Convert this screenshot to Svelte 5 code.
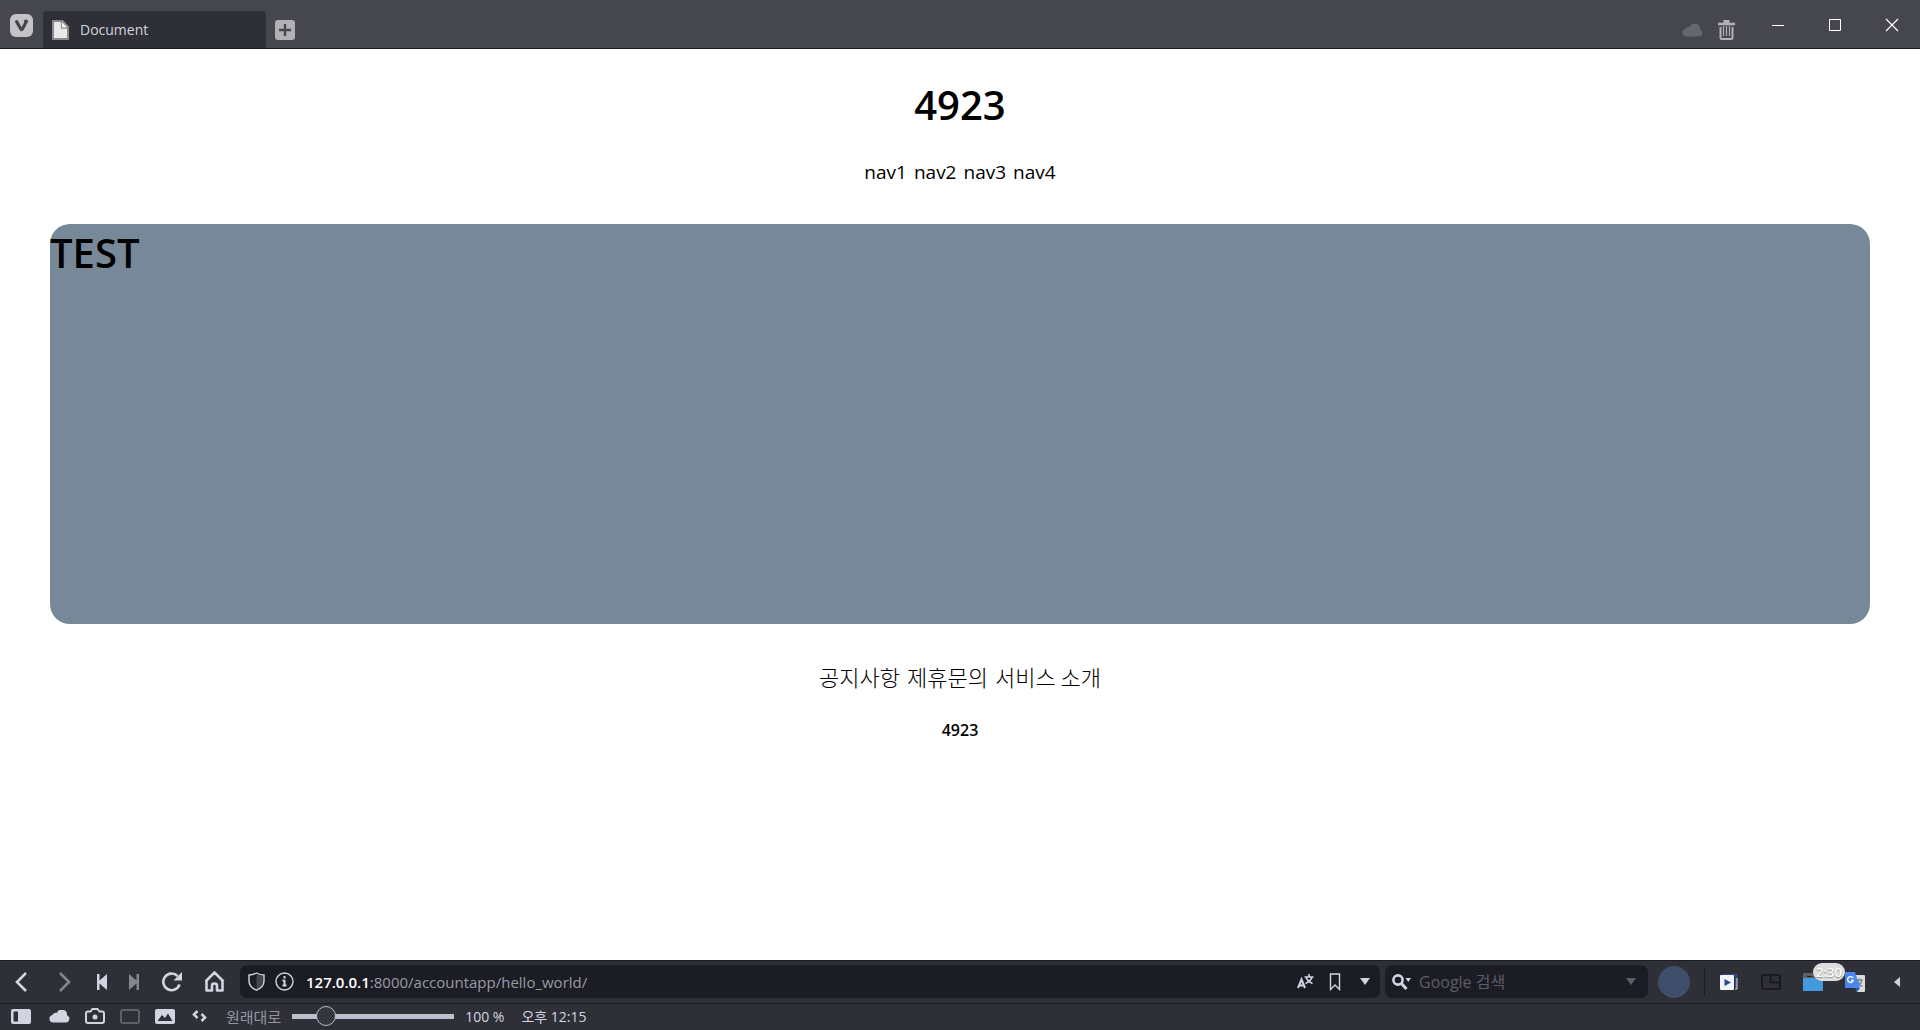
<script>
  let zoom = $state(100);
  const navLinks = ['nav1', 'nav2', 'nav3', 'nav4'];
  const footerLinks = ['공지사항', '제휴문의', '서비스 소개'];
</script>

<div class="browser">
  <header class="tabbar">
    <button class="app" aria-label="Vivaldi menu">
      <svg width="23" height="23" viewBox="0 0 23 23">
        <rect width="23" height="23" rx="6" fill="#c3c3c7" />
        <path d="M6.600 7.600 11 15.200Q11.600 16 12.200 15.200L14.600 11Q16 9 15.800 7.600" fill="none" stroke="#46464e" stroke-width="3.200" stroke-linecap="round" stroke-linejoin="round" />
        <circle cx="16" cy="7.600" r="2" fill="#46464e" />
      </svg>
    </button>
    <button class="tab">
      <svg width="17" height="20" viewBox="0 0 17 20">
        <path d="M1 1h9.500l5.500 6v12H1z" fill="#e9e9e9" stroke="#8b8b8b" stroke-width="2" stroke-linejoin="round" />
        <path d="M9.500 2v6H15" fill="#fff" stroke="#999" stroke-width="1.400" />
      </svg>
      <span>Document</span>
    </button>
    <button class="newtab" aria-label="New tab">
      <svg width="20" height="20" viewBox="0 0 20 20">
        <rect width="20" height="20" rx="3" fill="#b1b1b5" />
        <path d="M10 4v12M4 10h12" stroke="#46464e" stroke-width="2.400" />
      </svg>
    </button>
    <div class="fill"></div>
    <button class="tool" aria-label="Synced tabs">
      <svg width="21" height="13" viewBox="0 0 21 13"><path d="M4 12.500a3.800 3.800 0 0 1-.6-7.500A4 4 0 0 1 8 2.800a5.200 5.200 0 0 1 10 2.400 3.800 3.800 0 0 1-1 7.300z" fill="#66666e" /></svg>
    </button>
    <button class="tool" aria-label="Closed tabs">
      <svg width="17" height="20" viewBox="0 0 17 20" fill="none" stroke="#b1b1b5">
        <path d="M0 4h17" stroke-width="2.600" /><path d="M5.500 1.500h6" stroke-width="3" />
        <path d="M2.500 7v10.500q0 1.500 1.500 1.500h9q1.500 0 1.500-1.500V7" stroke-width="2" />
        <path d="M5.500 6v10M8.500 6v10M11.500 6v10" stroke-width="1.200" />
      </svg>
    </button>
    <div class="window">
      <button aria-label="Minimize"><svg width="14" height="14"><path d="M1 7.500h12" stroke="#fff" /></svg></button>
      <button aria-label="Maximize"><svg width="14" height="14"><path d="M1.500 1.500h11v11h-11z" stroke="#fff" fill="none" /></svg></button>
      <button aria-label="Close"><svg width="14" height="14"><path d="m1 1 12 12M13 1 1 13" stroke="#fff" stroke-width="1.200" /></svg></button>
    </div>
  </header>

  <main class="page">
    <h1>4923</h1>
    <nav>
      {#each navLinks as link}<a href="#{link}">{link}</a>{/each}
    </nav>
    <section class="hero"><h2>TEST</h2></section>
    <footer>
      <div class="links">
        {#each footerLinks as link}<a href="#{link}">{link}</a>{/each}
      </div>
      <h6>4923</h6>
    </footer>
  </main>

  <div class="toolbar">
    <button class="wide" aria-label="Back"><svg width="14" height="22" viewBox="0 0 14 22"><path d="M11 2 2 11l9 9" class="line" /></svg></button>
    <button class="wide dim" aria-label="Forward"><svg width="14" height="22" viewBox="0 0 14 22"><path d="m2 2 9 9-9 9" class="line" /></svg></button>
    <button class="narrow" aria-label="Rewind"><svg width="12" height="16" viewBox="0 0 12 16"><path d="M1 0h2.500v6.500L11 0v16L3.500 9.500V16H1z" fill="currentColor" /></svg></button>
    <button class="narrow dim" aria-label="Fast forward"><svg width="12" height="16" viewBox="0 0 12 16"><path d="M11 0H8.500v6.500L1 0v16l7.500-6.500V16H11z" fill="currentColor" /></svg></button>
    <button class="wide" aria-label="Reload"><svg width="20" height="20" viewBox="0 0 20 20"><path d="M17.500 12.500A8.300 8.300 0 1 1 15.500 4" class="line" /><path d="M20 0v8.500h-8.500z" fill="currentColor" /></svg></button>
    <button class="home" aria-label="Home"><svg width="21" height="21" viewBox="0 0 21 21"><path d="M1.500 10.500 10.500 1.500l9 9M2.500 10v9.500h5.500v-5q0-2 2.500-2t2.500 2v5h5.500V10" class="line" stroke-linejoin="round" /></svg></button>

    <div class="field address">
      <button class="info" aria-label="Content blocker"><svg width="17" height="19" viewBox="0 0 17 19"><path d="M8.500 2.500 15 4v5c0 4-2.500 6.500-6.500 8.500z" fill="#46464e" /><path d="M8.500 1Q12 3 16 3v6q0 6-7.500 9.200Q1 15 1 9V3q4 0 7.500-2z" fill="none" stroke="currentColor" stroke-width="1.400" /></svg></button>
      <button class="info" aria-label="Site info"><svg width="19" height="19" viewBox="0 0 19 19"><circle cx="9.500" cy="9.500" r="8.500" fill="none" stroke="currentColor" stroke-width="1.400" /><path d="M9.500 4v2.500M9.500 8v6M7.500 8.500h2M7.500 13.500h4" stroke="currentColor" stroke-width="2" /></svg></button>
      <div class="url" role="textbox" tabindex="0" aria-label="Address" contenteditable="true" spellcheck="false"><b>127.0.0.1</b>:8000/accountapp/hello_world/</div>
      <button class="action" aria-label="Translate page"><svg width="17" height="15" viewBox="0 0 17 15" fill="none" stroke="currentColor"><path d="M1 14 4.500 5.500 8 14M2.200 11.500h4.600" stroke-width="2" /><path d="M7.500 3h9M12 0v3M9 3q1 4 6.500 6.500M15 3q-1 4-6.500 6.500" stroke-width="1.600" /></svg></button>
      <button class="action" aria-label="Bookmark"><svg width="12" height="18" viewBox="0 0 12 18"><path d="M1.500 1h9v15.500L6 12l-4.500 4.500z" fill="none" stroke="currentColor" stroke-width="1.400" /></svg></button>
      <button class="action" aria-label="History"><svg width="10" height="7" viewBox="0 0 10 7"><path d="M0 0h10L5 7z" fill="currentColor" /></svg></button>
    </div>

    <div class="field search">
      <button class="engine" aria-label="Search engine"><svg width="20" height="16" viewBox="0 0 20 16"><circle cx="6" cy="6" r="4.600" fill="none" stroke="currentColor" stroke-width="2.600" /><path d="m9.500 9.500 5 5.500" stroke="currentColor" stroke-width="3" /><path d="M13.500 4H19l-2.750 4z" fill="currentColor" /></svg></button>
      <input type="text" aria-label="Google 검색" placeholder="Google 검색" />
      <button class="action muted" aria-label="Search history"><svg width="10" height="7" viewBox="0 0 10 7"><path d="M0 0h10L5 7z" fill="currentColor" /></svg></button>
    </div>

    <button class="profile" aria-label="Profile"></button>
    <span class="divider"></span>
    <button class="ext" aria-label="Media extension"><svg width="18" height="16" viewBox="0 0 18 16"><path d="M3 0h13v14" fill="none" stroke="#2c4f93" stroke-width="2" /><path d="M17 4v11h-2" fill="none" stroke="#d5d8e0" /><rect y="1" width="14" height="15" rx="1" fill="#f2f3f5" /><path d="M4.500 5v7L11 8.500z" fill="#244d93" /></svg></button>
    <button class="ext" aria-label="Picture in picture"><svg width="20" height="16" viewBox="0 0 20 16" fill="none" stroke="#15161b" stroke-width="1.600"><rect x="1" y="1" width="18" height="14" rx="1" /><path d="M9.500 2v6.500H18" /></svg></button>
    <button class="ext" aria-label="Timer extension"><svg width="20" height="18" viewBox="0 0 20 18"><path d="M0 0h20v5H0z" fill="#5f6062" /><path d="M4 3.500h5" stroke="#222" /><path d="M0 5h20v13H0z" fill="#4498dc" /></svg><span class="badge">2:30</span></button>
    <button class="ext" aria-label="Google Translate"><svg width="20" height="20" viewBox="0 0 20 20"><path d="M8 3h11q1 0 1 1v15q0 1-1 1h-7z" fill="#dadbdd" /><path d="M11.500 8h6M14.500 6.500V8M12.500 8.500q1 4 5 6M17 8q-1 4-4 7" fill="none" stroke="#6f8990" stroke-width="1.300" /><path d="M1 0h9l5 16H1q-1 0-1-1V1q0-1 1-1z" fill="#4a86ee" /><path d="M10 16h5l-3 4z" fill="#2f55b7" /><path d="M8 6A2.900 2.900 0 1 0 8.300 8.500H6" fill="none" stroke="#fff" stroke-width="1.400" /></svg></button>
    <button class="ext" aria-label="Show extensions"><svg width="6" height="10" viewBox="0 0 6 10"><path d="M6 0v10L0 5z" fill="currentColor" /></svg></button>
  </div>

  <div class="status">
    <button class="panel" aria-label="Panel"><svg width="20" height="15" viewBox="0 0 20 15"><rect width="20" height="15" rx="2" fill="currentColor" /><path d="M2.500 2.500H7v10H2.500z" fill="#2f2f37" /></svg></button>
    <button aria-label="Sync"><svg width="21" height="13" viewBox="0 0 21 13"><path d="M4 12.500a3.800 3.800 0 0 1-.6-7.500A4 4 0 0 1 8 2.800a5.200 5.200 0 0 1 10 2.400 3.800 3.800 0 0 1-1 7.300z" fill="currentColor" /></svg></button>
    <button aria-label="Capture page"><svg width="20" height="16" viewBox="0 0 20 16"><path d="M3 3.500h2.500L7.500 1h5l2 2.500H17q2 0 2 2V13q0 2-2 2H3q-2 0-2-2V5.500q0-2 2-2z" fill="none" stroke="currentColor" stroke-width="2" /><circle cx="10" cy="9" r="2.500" fill="currentColor" /></svg></button>
    <button class="faint" aria-label="Tile tabs"><svg width="20" height="15" viewBox="0 0 20 15"><rect x="1" y="1" width="18" height="13" rx="2" fill="none" stroke="currentColor" stroke-width="2" /></svg></button>
    <button aria-label="Images"><svg width="20" height="15" viewBox="0 0 20 15"><rect width="20" height="15" rx="2" fill="currentColor" /><path d="m2.500 12 4.500-6 3 3 3-4.500 4.500 7.500z" fill="#2f2f37" /></svg></button>
    <button aria-label="Page actions"><svg width="15" height="12" viewBox="0 0 15 12"><path d="M5.500 1 2 4.500 5.500 8M9.500 4 13 7.500 9.500 11" fill="none" stroke="currentColor" stroke-width="2.600" /></svg></button>
    <button class="reset" onclick={() => (zoom = 100)}>원래대로</button>
    <input class="slider" type="range" min="20" max="500" aria-label="Zoom" bind:value={zoom} />
    <span class="percent">{zoom} %</span>
    <time>오후 12:15</time>
  </div>
</div>

<style>
  :global(body) { margin: 0; background: #fff; }
  .browser { display: flex; flex-direction: column; min-height: 100vh; font-family: "Open Sans", "Noto Sans CJK KR", sans-serif; }
  button, input { margin: 0; padding: 0; border: 0; background: none; color: inherit; font: inherit; }
  button { display: flex; align-items: center; justify-content: center; flex: none; }
  svg { display: block; flex: none; }

  .tabbar { display: flex; align-items: flex-end; height: 48px; background: #46464e; border-bottom: 1px solid #1c1a26; }
  .app { width: 43px; height: 46px; }
  .tab { justify-content: flex-start; gap: 11px; width: 223px; height: 37px; padding: 0 9px; border-radius: 4px 4px 0 0; background: #2f2f37; color: #d0d4df; font-size: 14px; }
  .newtab { width: 38px; height: 36px; }
  .fill { flex: 1; }
  .tool { width: 34px; height: 36px; }
  .window { display: flex; align-self: flex-start; margin-left: 6px; }
  .window button { width: 57px; height: 50px; }

  .page { flex: 1; padding: 28px 50px; text-align: center; color: #000; }
  h1, h2, h6 { margin: 0; font-weight: 600; }
  h1, h2 { font-size: 40px; line-height: 56px; }
  nav, .links { display: flex; justify-content: center; }
  a { color: inherit; text-decoration: none; }
  nav { gap: 7px; margin: 24px 0 37px; font-size: 19px; line-height: 30px; }
  .hero { box-sizing: border-box; height: 400px; padding-top: 1px; border-radius: 20px; background: #778899; text-align: left; }
  .links { gap: 7px; margin-top: 35px; font-family: "Noto Sans CJK KR", sans-serif; font-size: 22px; font-weight: 300; line-height: 34px; }
  h6 { margin-top: 23px; font-size: 16px; line-height: 28px; }

  .toolbar { display: flex; align-items: center; height: 41px; padding: 0 2px 1px 0; border-top: 1px solid #1c1c26; background: #2f2f37; color: #d0d5e0; }
  .line { fill: none; stroke: currentColor; stroke-width: 2.6; }
  .wide { width: 43px; height: 40px; }
  .home { width: 42px; height: 40px; }
  .narrow { width: 32px; height: 40px; }
  .dim { color: #85868f; }
  .field { display: flex; align-items: center; height: 33px; border-radius: 7px; background: #1c1c25; }
  .address { flex: 1; min-width: 0; margin: 0 5px; padding-left: 2px; }
  .info { width: 28px; height: 33px; }
  .url { flex: 1; min-width: 0; overflow: hidden; margin-left: 8px; outline: none; white-space: nowrap; color: #989ba5; font-size: 15px; line-height: 24px; }
  .url b { color: #fff; font-weight: 600; }
  .action { width: 30px; height: 33px; }
  .search { width: 263px; }
  .engine { width: 34px; height: 33px; }
  .search input { flex: 1; min-width: 0; outline: none; font-size: 16px; line-height: 24px; }
  .search input::placeholder { color: #5c5d67; opacity: 1; }
  .muted { width: 34px; color: #5c5d67; }
  .profile { width: 32px; height: 32px; margin-left: 10px; border-radius: 50%; background: #3f4f6b; }
  .divider { width: 1px; height: 27px; margin: 0 3px 0 14px; background: #1c1c26; }
  .ext { position: relative; width: 42px; height: 40px; }
  .badge { position: absolute; top: 1px; left: 21px; width: 32px; height: 18px; z-index: 1; border-radius: 9px; background: #dedede; color: #fff; font-size: 13px; font-weight: 600; line-height: 18px; text-align: center; text-shadow: 0 1px 1px #888; }

  .status { display: flex; align-items: center; height: 24px; padding-bottom: 2px; border-top: 1px solid #1c1c26; background: #2f2f37; color: #d0d5e0; font-size: 14px; }
  .status button { width: 35px; height: 24px; }
  .status .panel { width: 42px; }
  .status .faint { color: #5f606a; }
  .status .reset { width: auto; margin: 0 11px 0 9px; color: #9295a0; font-size: 15px; }
  .slider { appearance: none; width: 162px; height: 20px; background: linear-gradient(#bbc0cc, #bbc0cc) center / 100% 5px no-repeat; border-radius: 3px; }
  .slider::-webkit-slider-thumb { appearance: none; box-sizing: border-box; width: 20px; height: 20px; border: 1px solid #bbc0cc; border-radius: 50%; background: #36363f; }
  .percent { margin-left: 11px; }
  time { margin-left: 17px; }
</style>
